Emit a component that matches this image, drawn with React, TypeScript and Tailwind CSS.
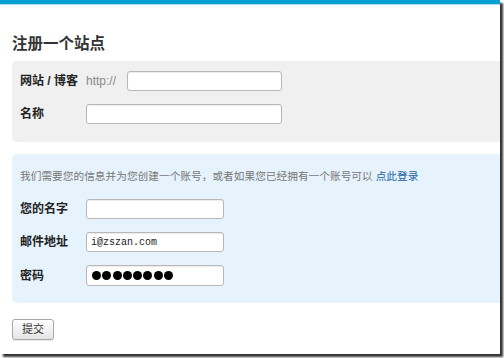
import React from "react";

const cjk = { fontFamily: '"Liberation Sans", "Noto Sans CJK SC", sans-serif' };

function Field({ w, value, mono }: { w: string; value?: string; mono?: boolean }) {
  return (
    <input
      readOnly
      value={value ?? ""}
      className={`${w} h-[20px] rounded-[3px] border border-[#b8b8b8] bg-white px-[4px] text-[10px] text-[#222] shadow-[inset_0_1px_1px_rgba(0,0,0,0.08)] outline-none`}
      style={mono ? { fontFamily: '"Liberation Mono", "DejaVu Sans Mono", monospace' } : undefined}
    />
  );
}

function Label({ children }: { children: React.ReactNode }) {
  return <div className="w-[66px] shrink-0 text-[12px] font-bold text-[#222]">{children}</div>;
}

export default function App() {
  return (
    <div className="w-[504px] h-[358px] bg-white" style={cjk}>
      <div className="w-[500px] h-[354px] bg-white shadow-[3px_3px_2px_rgba(0,0,0,0.8)] flex flex-col">
        <div className="h-[4px] bg-[#0a9fd2]" />
        <div className="h-[1px] bg-[#a8dcf0]" />
        <h1 className="mt-[27px] ml-[12px] h-[20px] leading-[20px] text-[15.5px] font-bold text-[#333]" style={{ fontFamily: '"Noto Sans CJK SC", serif' }}>
          注册一个站点
        </h1>
        <div className="mt-[9px] ml-[12px] rounded-l-[5px] bg-[#f0f0f0] pl-[8px] pt-[10px] pb-[18px] flex flex-col gap-[13px]">
          <div className="flex items-center h-[20px]">
            <Label>
              <span className="whitespace-nowrap">网站 / 博客</span>
            </Label>
            <span className="w-[41px] text-[12px] text-[#888]">http://</span>
            <Field w="w-[155px]" />
          </div>
          <div className="flex items-center h-[20px]">
            <Label>名称</Label>
            <Field w="w-[196px]" />
          </div>
        </div>
        <div className="mt-[12px] ml-[12px] rounded-l-[5px] bg-[#e6f3fd] pl-[8px] pt-[14px] pb-[17px] flex flex-col">
          <p className="h-[16px] leading-[16px] text-[10.7px] text-[#777] whitespace-nowrap">
            我们需要您的信息并为您创建一个账号，或者如果您已经拥有一个账号可以 <a className="text-[#21609f]">点此登录</a>
          </p>
          <div className="mt-[15px] flex flex-col gap-[13px]">
            <div className="flex items-center h-[20px]">
              <Label>您的名字</Label>
              <Field w="w-[138px]" />
            </div>
            <div className="flex items-center h-[20px]">
              <Label>邮件地址</Label>
              <Field w="w-[138px]" value="i@zszan.com" mono />
            </div>
            <div className="flex items-center h-[21px]">
              <Label>密码</Label>
              <div className="w-[138px] h-[21px] rounded-[3px] border border-[#b8b8b8] bg-white shadow-[inset_0_1px_1px_rgba(0,0,0,0.08)] flex items-center pl-[5px] gap-[1.25px]">
                {Array.from({ length: 8 }).map((_, i) => (
                  <span key={i} className="block w-[9px] h-[9px] rounded-full bg-black" />
                ))}
              </div>
            </div>
          </div>
        </div>
        <div className="mt-[13px] ml-[12px]">
          <button className="w-[42px] h-[21px] rounded-[3px] border border-[#a8a8a8] bg-gradient-to-b from-white to-[#e4e4e4] text-[11px] text-[#333] shadow-[0_1px_1px_rgba(0,0,0,0.1)]">
            提交
          </button>
        </div>
      </div>
    </div>
  );
}
